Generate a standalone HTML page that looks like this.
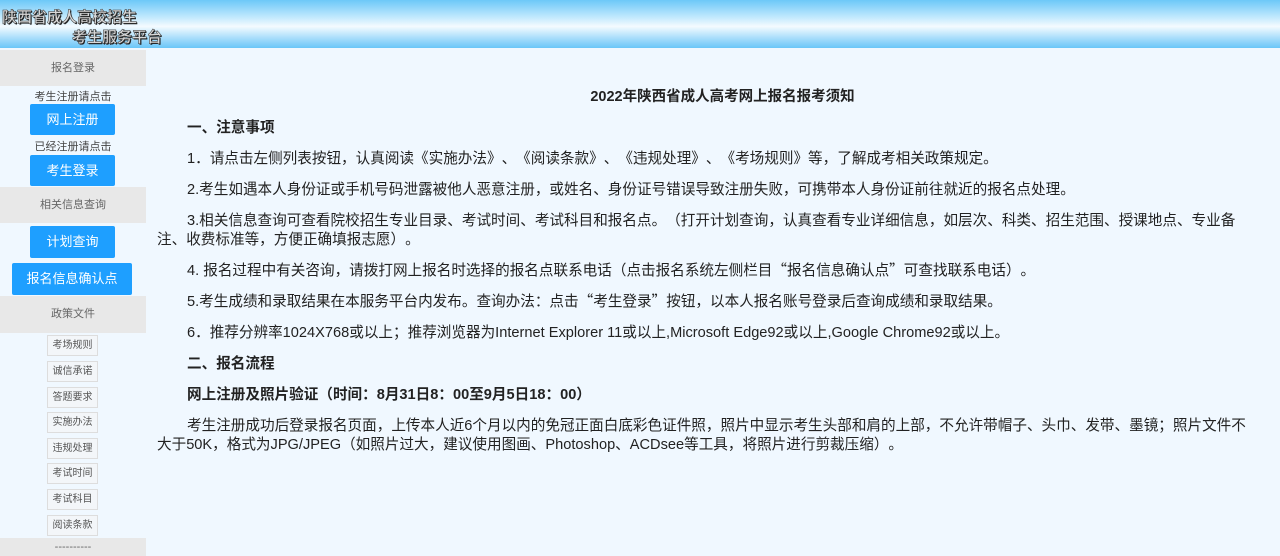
<!DOCTYPE html>
<html><head><meta charset="utf-8"><style>
*{margin:0;padding:0;box-sizing:border-box}
body{width:1280px;height:556px;overflow:hidden;background:#f0f8ff;font-family:"Liberation Sans","Noto Sans CJK SC",sans-serif;color:#222;position:relative;text-spacing-trim:space-all}
#hd{position:absolute;left:0;top:0;width:1280px;height:48px;background:linear-gradient(#6cc8f8 0%,#bfe8fd 35%,#f4fbff 55%,#a6dcfb 80%,#6ac6f8 100%)}
.t{position:absolute;font-weight:bold;font-size:15px;color:#d8d8d8;-webkit-text-stroke:0.5px #333;text-shadow:1px 1px 0 #222}
#sb{position:absolute;left:0;top:48px;width:146px;height:508px}
.g{position:absolute;left:0;width:146px;background:#e8e8e8;font-size:11px;color:#666;text-align:center}
.s{position:absolute;left:0;width:146px;text-align:center;font-size:11px;color:#444}
.b{position:absolute;background:#1e9fff;color:#fff;font-size:13px;text-align:center;border-radius:2px}
.m{position:absolute;left:47px;width:51px;height:21px;border:1px solid #ddd;background:#f3f6f9;font-size:10px;color:#555;text-align:center;line-height:19px}
#ct{position:absolute;left:157px;top:88px;width:1095px;font-size:14.6px;line-height:19px}
#ct p{text-indent:30px;margin-bottom:12px;height:auto}
#ct h{display:block;text-align:center;font-weight:bold;font-size:14.5px;margin-bottom:12px;padding-left:36px;line-height:19px}
.bo{font-weight:bold}
.q{font-family:"Noto Sans CJK SC",sans-serif;line-height:0;vertical-align:baseline}
</style></head><body>
<div id="hd">
<div class="t" style="left:2px;top:6px">陕西省成人高校招生</div>
<div class="t" style="left:72px;top:26px">考生服务平台</div>
</div>
<div id="sb">
<div class="g" style="top:2px;height:36px;line-height:36px">报名登录</div>
<div class="s" style="top:40px">考生注册请点击</div>
<div class="b" style="left:30px;top:56px;width:85px;height:31px;line-height:31px">网上注册</div>
<div class="s" style="top:90px">已经注册请点击</div>
<div class="b" style="left:30px;top:107px;width:85px;height:31px;line-height:31px">考生登录</div>
<div class="g" style="top:139px;height:36px;line-height:36px">相关信息查询</div>
<div class="b" style="left:30px;top:178px;width:85px;height:32px;line-height:32px">计划查询</div>
<div class="b" style="left:12px;top:215px;width:120px;height:32px;line-height:32px">报名信息确认点</div>
<div class="g" style="top:248px;height:37px;line-height:37px">政策文件</div>
<div class="m" style="top:287px">考场规则</div>
<div class="m" style="top:313px">诚信承诺</div>
<div class="m" style="top:339px">答题要求</div>
<div class="m" style="top:364px">实施办法</div>
<div class="m" style="top:390px">违规处理</div>
<div class="m" style="top:415px">考试时间</div>
<div class="m" style="top:441px">考试科目</div>
<div class="m" style="top:467px">阅读条款</div>
<div class="g" style="top:490px;height:18px;line-height:18px">----------</div>
</div>
<div id="ct">
<h>2022年陕西省成人高考网上报名报考须知</h>
<p class="bo" style="height:19px">一、注意事项</p>
<p style="height:19px">1．请点击左侧列表按钮，认真阅读《实施办法》、《阅读条款》、《违规处理》、《考场规则》等，了解成考相关政策规定。</p>
<p style="height:19px">2.考生如遇本人身份证或手机号码泄露被他人恶意注册，或姓名、身份证号错误导致注册失败，可携带本人身份证前往就近的报名点处理。</p>
<p style="height:38px">3.相关信息查询可查看院校招生专业目录、考试时间、考试科目和报名点。（打开计划查询，认真查看专业详细信息，如层次、科类、招生范围、授课地点、专业备注、收费标准等，方便正确填报志愿）。</p>
<p style="height:19px">4. 报名过程中有关咨询，请拨打网上报名时选择的报名点联系电话（点击报名系统左侧栏目<span class="q">“</span>报名信息确认点<span class="q">”</span>可查找联系电话）。</p>
<p style="height:19px">5.考生成绩和录取结果在本服务平台内发布。查询办法：点击<span class="q">“</span>考生登录<span class="q">”</span>按钮，以本人报名账号登录后查询成绩和录取结果。</p>
<p style="height:19px">6．推荐分辨率1024X768或以上；推荐浏览器为Internet Explorer 11或以上,Microsoft Edge92或以上,Google Chrome92或以上。</p>
<p class="bo" style="height:19px">二、报名流程</p>
<p class="bo" style="height:19px">网上注册及照片验证（时间：8月31日8<span class="q">：</span>00至9月5日18<span class="q">：</span>00）</p>
<p style="height:38px">考生注册成功后登录报名页面，上传本人近6个月以内的免冠正面白底彩色证件照，照片中显示考生头部和肩的上部，不允许带帽子、头巾、发带、墨镜；照片文件不大于50K，格式为JPG/JPEG（如照片过大，建议使用图画、Photoshop、ACDsee等工具，将照片进行剪裁压缩）。</p>
</div>
</body></html>
